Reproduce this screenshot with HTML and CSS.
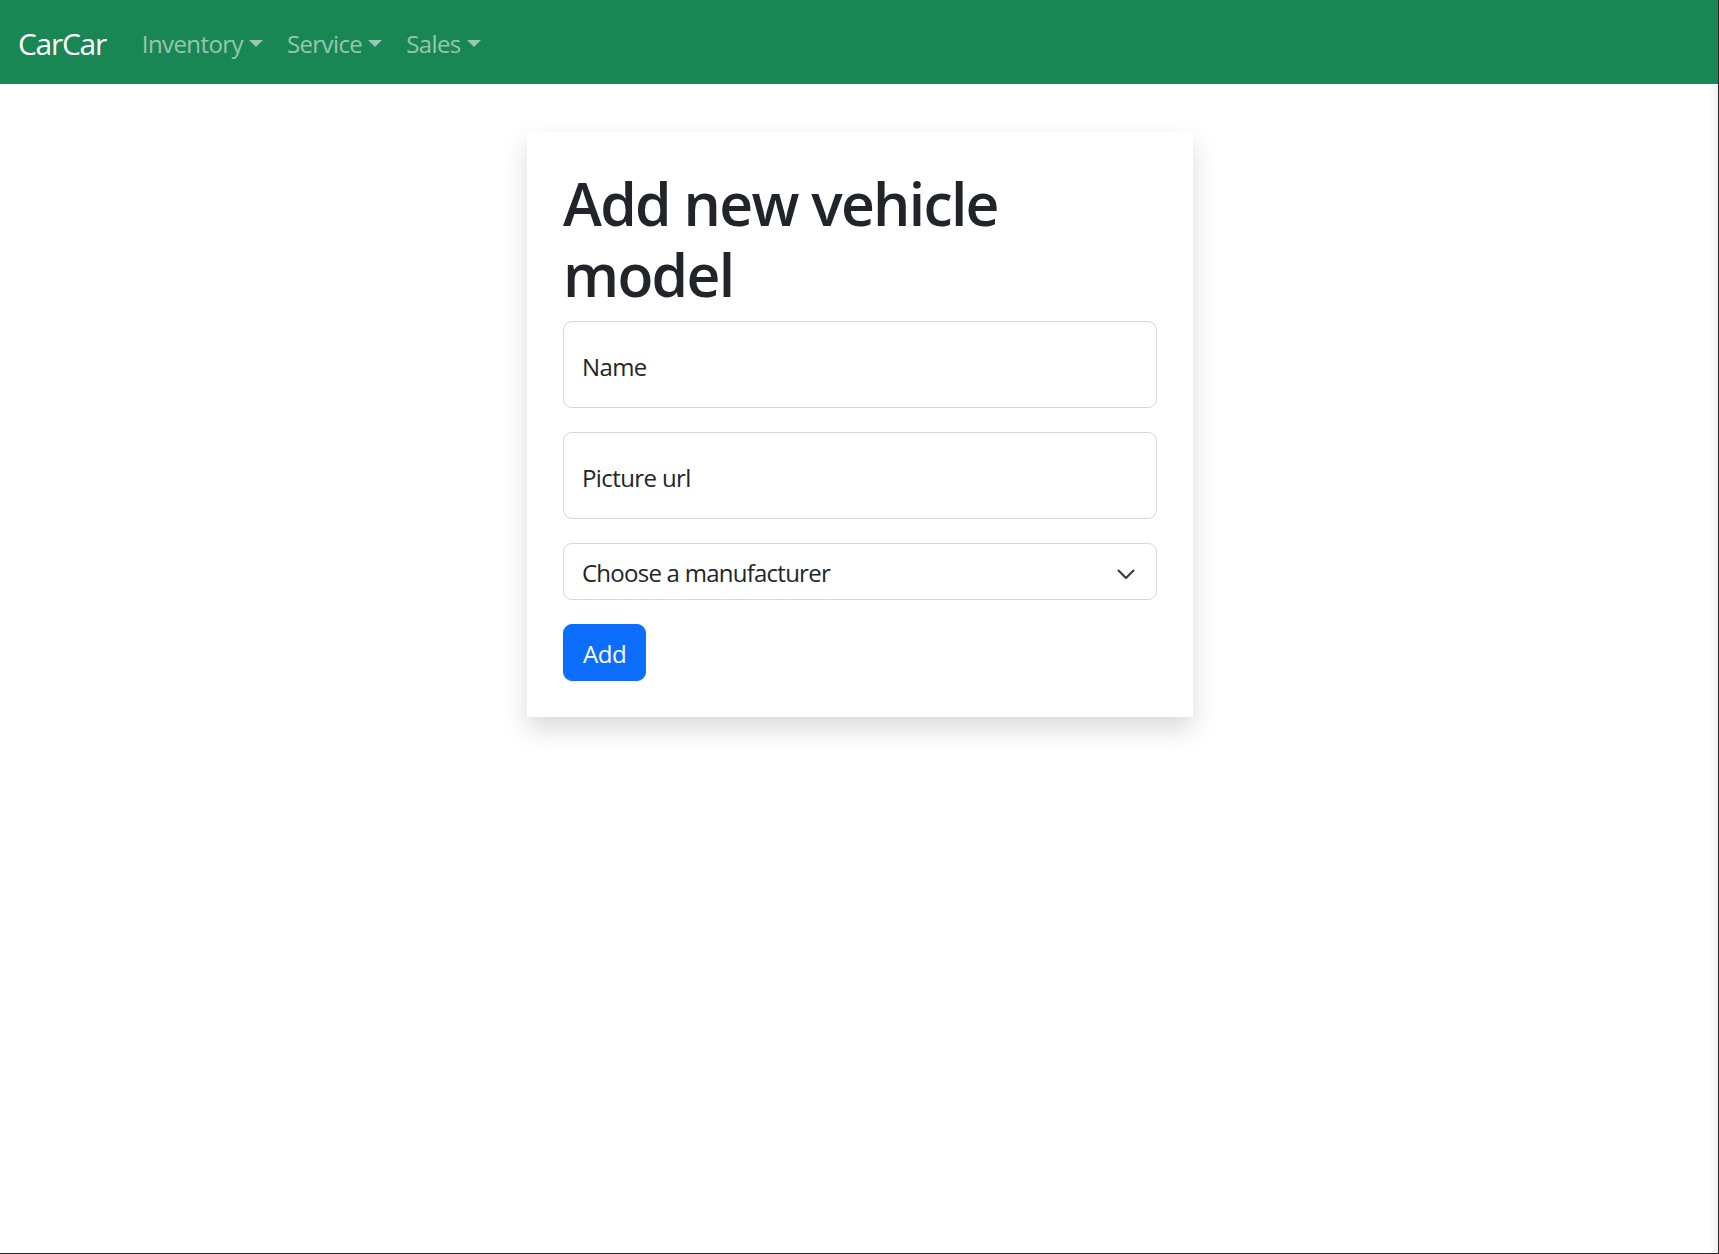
FILE: index.html
```html
<!DOCTYPE html>
<html lang="en">
<head>
<meta charset="utf-8">
<title>CarCar</title>
<link rel="stylesheet" href="styles.css">
</head>
<body>
<div class="page">
  <nav class="navbar">
    <a class="brand" href="#">CarCar</a>
    <ul class="nav">
      <li><a class="nav-link dropdown" href="#">Inventory</a></li>
      <li><a class="nav-link dropdown" href="#">Service</a></li>
      <li><a class="nav-link dropdown" href="#">Sales</a></li>
    </ul>
  </nav>
  <main class="main">
    <div class="card">
      <h1 class="title">Add new vehicle model</h1>
      <form class="form">
        <div class="field">
          <input class="input" type="text" placeholder="Name" aria-label="Name">
        </div>
        <div class="field">
          <input class="input" type="text" placeholder="Picture url" aria-label="Picture url">
        </div>
        <div class="field">
          <div class="select">
            <span class="select-text">Choose a manufacturer</span>
            <svg class="chevron" width="24" height="18" viewBox="0 0 16 12" aria-hidden="true"><path d="m3 5 5 5 5-5" fill="none" stroke="#343a40" stroke-width="1.4" stroke-linecap="round" stroke-linejoin="round"/></svg>
          </div>
        </div>
        <button class="btn" type="button">Add</button>
      </form>
    </div>
  </main>
</div>
</body>
</html>
```
FILE: styles.css
```css
html, body {
  margin: 0;
  padding: 0;
  background: #fff;
}
body {
  font-family: "Open Sans", "Noto Sans", "Liberation Sans", sans-serif;
  color: #212529;
  font-size: 24px;
  line-height: 1.5;
}
.page {
  min-height: 1254px;
  box-sizing: border-box;
  border-right: 1px solid #2a2a2a;
  border-bottom: 1px solid #2a2a2a;
  display: flex;
  flex-direction: column;
}
.navbar {
  background: #198754;
  display: flex;
  align-items: center;
  padding: 14px 18px 11px;
  height: 84px;
  box-sizing: border-box;
}
.brand {
  color: #fff;
  text-decoration: none;
  font-size: 30px;
  line-height: 45px;
  margin-right: 24px;
  letter-spacing: -1.3px;
}
.nav {
  display: flex;
  list-style: none;
  margin: 0;
  padding: 0;
}
.nav-link {
  display: block;
  color: rgba(255, 255, 255, 0.55);
  text-decoration: none;
  padding: 12px 12px;
  line-height: 36px;
  letter-spacing: -0.6px;
}
.dropdown::after {
  content: "";
  display: inline-block;
  margin-left: 6px;
  vertical-align: 6px;
  border-top: 7px solid;
  border-right: 7px solid transparent;
  border-left: 7px solid transparent;
  border-bottom: 0;
}
.main {
  flex: 1;
  display: flex;
  justify-content: center;
  align-items: flex-start;
  padding-top: 48px;
  padding-left: 2px;
  box-shadow: inset -9px 0 8px -8px rgba(0, 0, 0, 0.12);
}
.card {
  width: 666px;
  box-sizing: border-box;
  padding: 36px;
  background: #fff;
  box-shadow: 0 12px 24px rgba(0, 0, 0, 0.15);
}
.title {
  margin: 0 0 12px;
  font-size: 58.8px;
  line-height: 70.5px;
  font-weight: 600;
  letter-spacing: -1.7px;
}
.form {
  display: flex;
  flex-direction: column;
  align-items: flex-start;
}
.field {
  width: 100%;
  margin-bottom: 24px;
}
.input {
  display: block;
  width: 100%;
  box-sizing: border-box;
  height: 87px;
  padding: 26px 18px 22px;
  font: inherit;
  letter-spacing: -0.6px;
  color: #212529;
  border: 1px solid #d3d7dc;
  border-radius: 9px;
  background: #fff;
  outline: none;
}
.input::placeholder {
  color: #212529;
  opacity: 1;
}
.select {
  display: flex;
  align-items: center;
  justify-content: space-between;
  height: 57px;
  box-sizing: border-box;
  padding: 0 18px;
  border: 1px solid #d3d7dc;
  border-radius: 9px;
  background: #fff;
}
.select-text {
  letter-spacing: -0.75px;
  padding-top: 2px;
}
.chevron {
  display: block;
}
.btn {
  font: inherit;
  letter-spacing: -0.4px;
  color: #fff;
  background: #0d6efd;
  border: 1px solid #0d6efd;
  border-radius: 9px;
  padding: 10px 19px 8px;
  line-height: 37px;
  height: 57px;
  box-sizing: border-box;
  cursor: pointer;
}
```
